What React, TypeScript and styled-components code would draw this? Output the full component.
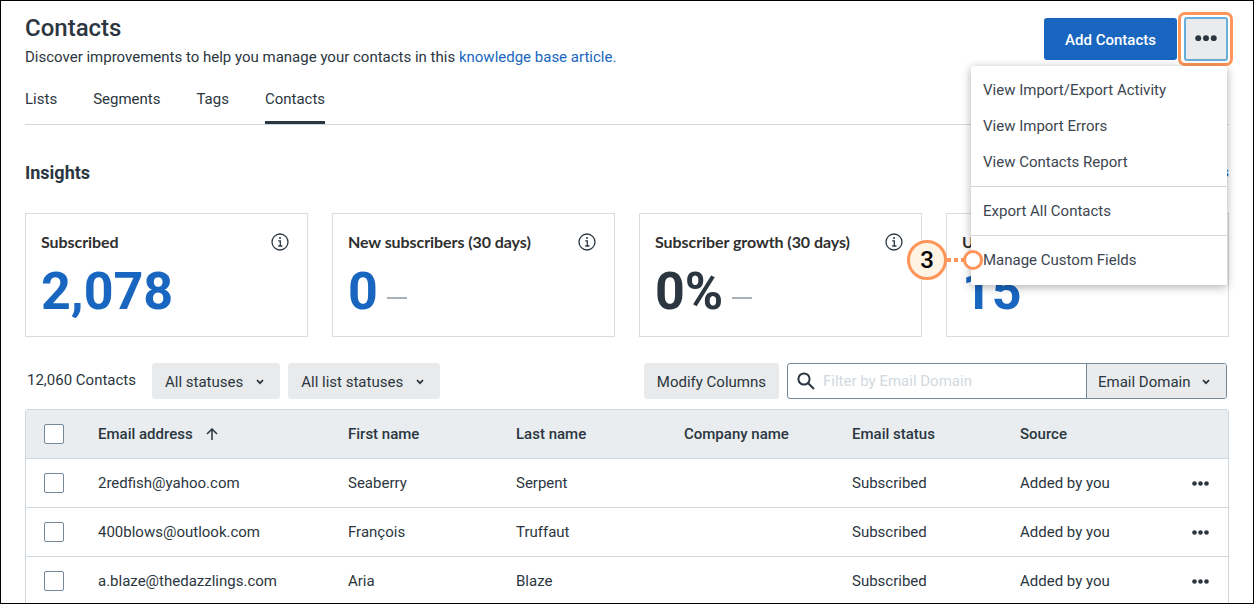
import { FC } from "react";
import styled, { createGlobalStyle } from "styled-components";

const GlobalStyle = createGlobalStyle`
  html, body {
    margin: 0;
    padding: 0;
    background: #fff;
  }
  * {
    box-sizing: border-box;
  }
`;

const Page = styled.div`
  position: relative;
  width: 1254px;
  height: 604px;
  overflow: hidden;
  border: 1px solid #000;
  padding: 0 24px;
  font-family: Roboto, "Liberation Sans", sans-serif;
  font-size: 15px;
  color: #2b3640;
  background: #fff;
`;

const Header = styled.div`
  display: flex;
  justify-content: space-between;
  height: 66px;
  padding-top: 12px;
`;

const Title = styled.h1`
  margin: 0;
  font-size: 24px;
  line-height: 30px;
  font-weight: 500;
  color: #2b3640;
`;

const Description = styled.p`
  margin: 4px 0 0;
  font-size: 15px;
  line-height: 20px;
`;

const Link = styled.a`
  color: #1866bf;
  text-decoration: none;
`;

const Actions = styled.div`
  display: flex;
  gap: 7px;
  margin-top: 5px;
  margin-right: 1px;
`;

const PrimaryButton = styled.button`
  width: 133px;
  height: 42px;
  padding: 1px 0 0;
  border: 0;
  border-radius: 3px;
  background: #1866bf;
  color: #fff;
  font: 500 15px Roboto, sans-serif;
`;

const MoreButton = styled.button`
  position: relative;
  width: 44px;
  height: 44px;
  margin-top: -1px;
  padding: 0 0 2px;
  border: 2px solid #68aedb;
  border-radius: 3px;
  background: #e9ebed;
  display: flex;
  align-items: center;
  justify-content: center;
  &::after {
    content: "";
    position: absolute;
    inset: -7px -7px -7px -8px;
    border: 3px solid #ff9559;
    border-radius: 7px;
  }
`;

const Tabs = styled.div`
  display: flex;
  gap: 36px;
  height: 58px;
  border-bottom: 1px solid #cfd7dd;
`;

const Tab = styled.div<{ $active?: boolean }>`
  height: 57px;
  padding-top: 22px;
  line-height: 20px;
  border-bottom: 3px solid ${(p) => (p.$active ? "#2b3640" : "transparent")};
`;

const InsightsHeader = styled.div`
  display: flex;
  justify-content: space-between;
  align-items: center;
  margin-top: 34px;
  height: 26px;
`;

const InsightsTitle = styled.h2`
  margin: 0;
  font-size: 18px;
  font-weight: 700;
`;

const Cards = styled.div`
  display: grid;
  grid-template-columns: repeat(4, 283px);
  gap: 24px;
  margin-top: 28px;
`;

const Card = styled.div`
  height: 124px;
  padding: 19px 15px;
  border: 1px solid #dcdcdc;
`;

const CardTop = styled.div`
  display: flex;
  justify-content: space-between;
  align-items: center;
  height: 18px;
  font-family: Lato, sans-serif;
  font-size: 16px;
  font-weight: 700;
  letter-spacing: -0.07px;
  color: #2f2f2f;
  white-space: nowrap;
`;

const CardLabel = styled.span`
  margin-top: -2px;
`;

const CardValue = styled.div`
  display: flex;
  align-items: center;
  gap: 9px;
  margin-top: 8px;
  height: 66px;
`;

const Big = styled.span<{ $dark?: boolean }>`
  font-size: 52px;
  font-weight: 700;
  line-height: 66px;
  letter-spacing: 0;
  color: ${(p) => (p.$dark ? "#2b3640" : "#1866bf")};
`;

const Dash = styled.span`
  width: 20px;
  height: 2px;
  margin-top: 12px;
  background: #a9b1b8;
`;

const Toolbar = styled.div`
  display: flex;
  align-items: center;
  height: 36px;
  margin-top: 26px;
  margin-right: 2px;
`;

const Count = styled.span`
  margin: 0 16px 0 2px;
  line-height: 20px;
  position: relative;
  top: -1px;
`;

const GrayButton = styled.button`
  display: flex;
  align-items: center;
  gap: 13px;
  height: 36px;
  padding: 2px 16px 0 13px;
  margin-right: 8px;
  border: 0;
  border-radius: 3px;
  background: #e9eaeb;
  color: #2b3640;
  font: 400 15px Roboto, sans-serif;
`;

const PlainGrayButton = styled(GrayButton)`
  padding-right: 13px;
`;

const Spacer = styled.div`
  flex: 1;
`;

const FilterGroup = styled.div`
  display: flex;
  width: 440px;
  height: 36px;
  border: 1px solid #74889a;
  border-radius: 3px;
  overflow: hidden;
`;

const SearchBox = styled.div`
  flex: 1;
  display: flex;
  align-items: center;
  gap: 7px;
  padding-left: 8px;
`;

const Placeholder = styled.span`
  color: #d3d9de;
  font-size: 15px;
`;

const DomainSelect = styled.div`
  display: flex;
  align-items: center;
  gap: 11px;
  width: 140px;
  padding: 2px 0 0 11px;
  border-left: 1px solid #74889a;
  background: #e9ebed;
`;

const Table = styled.div`
  margin-top: 10px;
  border: 1px solid #cfd7dd;
  border-radius: 3px 3px 0 0;
`;

const Row = styled.div<{ $head?: boolean }>`
  display: grid;
  grid-template-columns: 72px 250px 168px 168px 168px 168px 1fr 36px;
  align-items: center;
  height: 49px;
  border-bottom: 1px solid #cfd7dd;
  background: ${(p) => (p.$head ? "#e9edf0" : "#fff")};
  font-weight: ${(p) => (p.$head ? 500 : 400)};
`;

const CheckCell = styled.div`
  padding-left: 18px;
`;

const Checkbox = styled.div`
  width: 20px;
  height: 20px;
  border: 1px solid #74889a;
  border-radius: 2px;
  background: #fff;
`;

const SortCell = styled.div`
  display: flex;
  align-items: center;
  gap: 13px;
`;

const Menu = styled.div`
  position: absolute;
  left: 970px;
  top: 65px;
  width: 256px;
  height: 219px;
  padding-top: 6px;
  background: #fff;
  border-radius: 2px;
  box-shadow: 0 2px 10px rgba(0, 0, 0, 0.32);
`;

const MenuItem = styled.div`
  height: 36px;
  padding: 8px 12px;
  line-height: 20px;
  font-size: 15px;
  color: #3c4650;
`;

const MenuDivider = styled.div`
  height: 1px;
  margin: 6px 0;
  background: #cfd7dd;
`;

const StepBadge = styled.div`
  position: absolute;
  left: 906px;
  top: 239px;
  width: 40px;
  height: 40px;
  display: flex;
  align-items: center;
  justify-content: center;
  border: 3px solid #ff9559;
  border-radius: 50%;
  background: #fff3e4;
  color: #000;
  font-size: 24px;
  font-weight: 500;
`;

const StepLine = styled.div`
  position: absolute;
  left: 946px;
  top: 257px;
  width: 18px;
  height: 4px;
  background: repeating-linear-gradient(to right, #ff9559 0 4px, transparent 4px 7px);
`;

const StepRing = styled.div`
  position: absolute;
  left: 962px;
  top: 249px;
  width: 20px;
  height: 20px;
  border: 3px solid #ff9559;
  border-radius: 50%;
  background: #fff;
`;

const IconSlot = styled.span`
  display: flex;
  margin-right: 3px;
`;

const Dots: FC<{ width?: number }> = ({ width = 17 }) => (
  <svg width={width} height={(width * 5) / 17} viewBox="0 0 17 5" fill="#2b3640">
    <circle cx="2.5" cy="2.5" r="2.3" />
    <circle cx="8.5" cy="2.5" r="2.3" />
    <circle cx="14.5" cy="2.5" r="2.3" />
  </svg>
);

const Chevron = () => (
  <svg width="8" height="6" viewBox="0 0 8 6" fill="none" stroke="#2b3640" strokeWidth="1.7">
    <path d="M1 1.2l3 3 3-3" />
  </svg>
);

const InfoIcon = () => (
  <IconSlot>
    <svg width="18" height="18" viewBox="0 0 18 18" fill="none" stroke="#2b3640">
      <circle cx="9" cy="9" r="8" strokeWidth="1.3" />
      <path d="M7.2 7.8H9.3V13M7.2 13h4.2" strokeWidth="1.3" />
      <circle cx="9" cy="5" r="1" fill="#2b3640" stroke="none" />
    </svg>
  </IconSlot>
);

const SearchIcon = () => (
  <svg width="20" height="20" viewBox="0 0 20 20" fill="none" stroke="#2b3640" strokeWidth="2">
    <circle cx="8" cy="8" r="5.6" />
    <path d="M12 12l6 6" />
  </svg>
);

const SortArrow = () => (
  <svg width="12" height="12" viewBox="0 0 12 12" fill="none" stroke="#2b3640" strokeWidth="1.5">
    <path d="M6 12V1.5M1 6l5-5 5 5" />
  </svg>
);

const contacts = [
  ["2redfish@yahoo.com", "Seaberry", "Serpent"],
  ["400blows@outlook.com", "François", "Truffaut"],
  ["a.blaze@thedazzlings.com", "Aria", "Blaze"],
];

const stats = [
  { label: "Subscribed", value: "2,078" },
  { label: "New subscribers (30 days)", value: "0", dash: true },
  { label: "Subscriber growth (30 days)", value: "0%", dash: true, dark: true },
  { label: "Unsubscribed", value: "15" },
];

const menuGroups = [
  ["View Import/Export Activity", "View Import Errors", "View Contacts Report"],
  ["Export All Contacts"],
  ["Manage Custom Fields"],
];

export default function App() {
  return (
    <Page>
      <GlobalStyle />
      <Header>
        <div>
          <Title>Contacts</Title>
          <Description>
            Discover improvements to help you manage your contacts in this{" "}
            <Link>knowledge base article.</Link>
          </Description>
        </div>
        <Actions>
          <PrimaryButton>Add Contacts</PrimaryButton>
          <MoreButton aria-label="More actions">
            <Dots width={22} />
          </MoreButton>
        </Actions>
      </Header>

      <Tabs>
        <Tab>Lists</Tab>
        <Tab>Segments</Tab>
        <Tab>Tags</Tab>
        <Tab $active>Contacts</Tab>
      </Tabs>

      <InsightsHeader>
        <InsightsTitle>Insights</InsightsTitle>
        <Link>Hide insights</Link>
      </InsightsHeader>

      <Cards>
        {stats.map((s) => (
          <Card key={s.label}>
            <CardTop>
              <CardLabel>{s.label}</CardLabel>
              <InfoIcon />
            </CardTop>
            <CardValue>
              <Big $dark={s.dark}>{s.value}</Big>
              {s.dash && <Dash />}
            </CardValue>
          </Card>
        ))}
      </Cards>

      <Toolbar>
        <Count>12,060 Contacts</Count>
        <GrayButton>
          All statuses <Chevron />
        </GrayButton>
        <GrayButton>
          All list statuses <Chevron />
        </GrayButton>
        <Spacer />
        <PlainGrayButton>Modify Columns</PlainGrayButton>
        <FilterGroup>
          <SearchBox>
            <SearchIcon />
            <Placeholder>Filter by Email Domain</Placeholder>
          </SearchBox>
          <DomainSelect>
            Email Domain <Chevron />
          </DomainSelect>
        </FilterGroup>
      </Toolbar>

      <Table>
        <Row $head>
          <CheckCell>
            <Checkbox />
          </CheckCell>
          <SortCell>
            Email address <SortArrow />
          </SortCell>
          <div>First name</div>
          <div>Last name</div>
          <div>Company name</div>
          <div>Email status</div>
          <div>Source</div>
          <div />
        </Row>
        {contacts.map(([email, first, last]) => (
          <Row key={email}>
            <CheckCell>
              <Checkbox />
            </CheckCell>
            <div>{email}</div>
            <div>{first}</div>
            <div>{last}</div>
            <div />
            <div>Subscribed</div>
            <div>Added by you</div>
            <Dots />
          </Row>
        ))}
      </Table>

      <Menu>
        {menuGroups.map((group, i) => (
          <div key={group[0]}>
            {i > 0 && <MenuDivider />}
            {group.map((item) => (
              <MenuItem key={item}>{item}</MenuItem>
            ))}
          </div>
        ))}
      </Menu>

      <StepLine />
      <StepBadge>3</StepBadge>
      <StepRing />
    </Page>
  );
}
